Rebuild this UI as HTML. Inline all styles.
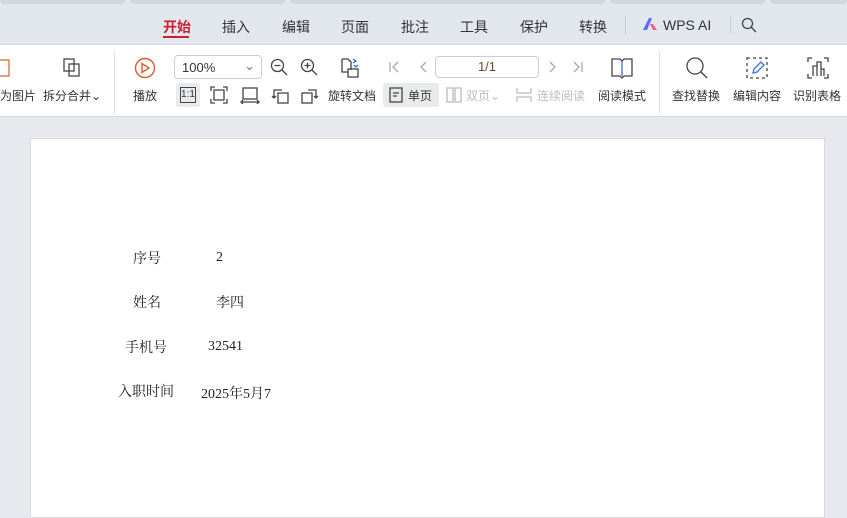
<!DOCTYPE html>
<html><head><meta charset="utf-8"><style>
*{margin:0;padding:0;box-sizing:border-box}
body{width:847px;height:508px;overflow:hidden;background:#e7e9ee;font-family:"Liberation Sans","Noto Sans CJK SC",sans-serif;position:relative;color:#333}
.a{position:absolute;white-space:nowrap}
.tb{font-size:14px;color:#333;top:17px}
.t{font-size:12px;color:#333}
.g{color:#b9bcc2}
svg{position:absolute;fill:none;stroke:#444;stroke-width:1.3}
.doc{font-family:"Liberation Serif","Noto Serif CJK SC",serif;font-size:14px;color:#222}
.n{margin-top:2px}
</style></head><body>
<div class="a" style="left:0;top:0;width:847px;height:45px;background:#e2e6ed"></div>
<div class="a" style="left:0;top:0;width:125px;height:4px;background:#d3d7de;border-radius:0 0 6px 6px"></div>
<div class="a" style="left:130px;top:0;width:155px;height:4px;background:#d3d7de;border-radius:0 0 6px 6px"></div>
<div class="a" style="left:290px;top:0;width:315px;height:4px;background:#d3d7de;border-radius:0 0 6px 6px"></div>
<div class="a" style="left:610px;top:0;width:155px;height:4px;background:#d3d7de;border-radius:0 0 6px 6px"></div>
<div class="a" style="left:770px;top:0;width:77px;height:4px;background:#d3d7de;border-radius:0 0 6px 6px"></div>
<div class="a tb" style="left:163px;color:#c8202f;font-weight:bold">开始</div>
<div class="a" style="left:163px;top:36px;width:26px;height:2px;background:#c8202f"></div>
<div class="a tb" style="left:222px">插入</div>
<div class="a tb" style="left:282px">编辑</div>
<div class="a tb" style="left:341px">页面</div>
<div class="a tb" style="left:401px">批注</div>
<div class="a tb" style="left:460px">工具</div>
<div class="a tb" style="left:520px">保护</div>
<div class="a tb" style="left:579px">转换</div>
<div class="a" style="left:625px;top:16px;width:1px;height:18px;background:#c8ccd3"></div>
<svg style="left:643px;top:18px;stroke:none" width="14" height="12"><path d="M0 12L6 0h3L4 12z" fill="#5a6bff"/><path d="M7 6l3 6h4l-4-6z" fill="#ff5a8a"/></svg>
<div class="a tb" style="left:663px">WPS AI</div>
<div class="a" style="left:730px;top:16px;width:1px;height:18px;background:#c8ccd3"></div>
<svg style="left:741px;top:17px" width="16" height="16"><circle cx="6.5" cy="6.5" r="5"/><path d="M10 10l5 5"/></svg>
<div class="a" style="left:0;top:44px;width:847px;height:73px;background:#fff;border-top:1px solid #d5d8de;border-bottom:1px solid #d5d8de"></div>
<div class="a" style="left:114px;top:50px;width:1px;height:64px;background:#e0e2e6"></div>
<div class="a" style="left:659px;top:50px;width:1px;height:64px;background:#e0e2e6"></div>
<svg style="left:-4px;top:58px;stroke:#e06a3a" width="16" height="20"><rect x="1" y="2" width="12" height="16"/></svg>
<div class="a t" style="left:0;top:87px">为图片</div>
<svg style="left:62px;top:58px" width="20" height="20"><rect x="2" y="1" width="10" height="12"/><rect x="7" y="6" width="10" height="12"/></svg>
<div class="a t" style="left:43px;top:87px">拆分合并⌄</div>
<svg style="left:134px;top:57px;stroke:#e0582a;stroke-width:1.4" width="22" height="22"><circle cx="11" cy="11" r="9.5"/><path d="M8 6.5v9l7-4.5z"/></svg>
<div class="a t" style="left:133px;top:87px">播放</div>
<div class="a" style="left:174px;top:55px;width:88px;height:24px;border:1px solid #c9ccd2;border-radius:4px;font-size:13px;padding:4px 7px;color:#333">100%<span style="position:absolute;right:6px;top:2px;color:#777">⌄</span></div>
<svg style="left:270px;top:58px" width="18" height="18"><circle cx="7.5" cy="7.5" r="6"/><path d="M12 12l5 5M4.5 7.5h6"/></svg>
<svg style="left:300px;top:58px" width="18" height="18"><circle cx="7.5" cy="7.5" r="6"/><path d="M12 12l5 5M4.5 7.5h6M7.5 4.5v6"/></svg>
<svg style="left:340px;top:57px" width="22" height="22"><path d="M2 2h6l3 3v8M2 2v13h6"/><rect x="8" y="12" width="10" height="8"/><path d="M13 2l3 2-3 2M16 4h-2M18 8l-2 2-2-2" stroke="#3a6fd8"/></svg>
<div class="a" style="left:176px;top:83px;width:24px;height:24px;background:#e9eaec;border-radius:3px"></div>
<div class="a" style="left:180px;top:87px;width:16px;height:16px;border:1px solid #444;font-size:10px;line-height:14px;text-align:center">1:1</div>
<svg style="left:210px;top:86px" width="18" height="18"><path d="M1 5V1h4M13 1h4v4M17 13v4h-4M5 17H1v-4M4 4h10v10H4z"/></svg>
<svg style="left:240px;top:86px" width="20" height="18"><rect x="3" y="2" width="14" height="11"/><path d="M1 16h18M3 14l-2 2 2 2M17 14l2 2-2 2"/></svg>
<svg style="left:270px;top:86px" width="20" height="18"><rect x="8" y="7" width="10" height="10"/><path d="M12 4H4v8M2 10l2 2 2-2"/></svg>
<svg style="left:300px;top:86px" width="20" height="18"><rect x="2" y="7" width="10" height="10"/><path d="M8 4h8v8M14 10l2 2 2-2"/></svg>
<div class="a t" style="left:328px;top:87px">旋转文档</div>
<div class="a" style="left:383px;top:83px;width:56px;height:24px;background:#e9eaec;border-radius:3px"></div>
<svg style="left:389px;top:87px" width="14" height="16"><rect x="1" y="1" width="12" height="14"/><path d="M4 6h6M4 9h4"/></svg>
<div class="a t" style="left:408px;top:87px">单页</div>
<svg style="left:446px;top:87px;stroke:#bbb" width="16" height="16"><rect x="1" y="1" width="6" height="14"/><rect x="9" y="1" width="6" height="14"/></svg>
<div class="a t g" style="left:466px;top:87px">双页⌄</div>
<svg style="left:516px;top:87px;stroke:#bbb" width="16" height="16"><path d="M1 1v5h14V1M1 15v-5h14v5"/></svg>
<div class="a t g" style="left:537px;top:87px">连续阅读</div>
<svg style="left:388px;top:60px;stroke:#aaa" width="80" height="14"><path d="M2 2v10M10 2L5 7l5 5M38 2l-5 5 5 5"/></svg>
<div class="a" style="left:435px;top:56px;width:104px;height:22px;border:1px solid #c9ccd2;border-radius:4px;font-size:13px;text-align:center;line-height:20px;color:#6b4a2a">1/1</div>
<svg style="left:546px;top:60px;stroke:#aaa" width="40" height="14"><path d="M4 2l5 5-5 5M28 2l5 5-5 5M36 2v10"/></svg>
<svg style="left:610px;top:56px" width="24" height="24"><path d="M2 3h8l2 2 2-2h8v17h-8l-2 2-2-2H2z"/><path d="M12 5v15" stroke="#3a6fd8"/></svg>
<div class="a t" style="left:598px;top:87px">阅读模式</div>
<svg style="left:685px;top:56px" width="24" height="24"><circle cx="10" cy="10" r="8"/><path d="M16 16l6 6"/></svg>
<div class="a t" style="left:672px;top:87px">查找替换</div>
<svg style="left:745px;top:56px" width="24" height="24"><path d="M2 2h20v20H2z" stroke-dasharray="3 3"/><path d="M8 17l1-4 7-7 3 3-7 7z" stroke="#3a6fd8"/></svg>
<div class="a t" style="left:733px;top:87px">编辑内容</div>
<svg style="left:806px;top:56px" width="24" height="24"><path d="M2 6V2h4M18 2h4v4M22 18v4h-4M6 22H2v-4M7 20V10h4v10M11 20V6h4v14M15 20v-7h3v7"/></svg>
<div class="a t" style="left:793px;top:87px">识别表格</div>
<div class="a" style="left:30px;top:138px;width:795px;height:380px;background:#fff;border:1px solid #d8dadf"></div>
<div class="a doc" style="left:133px;top:248px">序号</div>
<div class="a doc n" style="left:216px;top:248px">2</div>
<div class="a doc" style="left:133px;top:292px">姓名</div>
<div class="a doc" style="left:216px;top:292px">李四</div>
<div class="a doc" style="left:125px;top:337px">手机号</div>
<div class="a doc n" style="left:208px;top:337px">32541</div>
<div class="a doc" style="left:118px;top:381px">入职时间</div>
<div class="a doc n" style="left:201px;top:381px">2025年5月7</div>
</body></html>
